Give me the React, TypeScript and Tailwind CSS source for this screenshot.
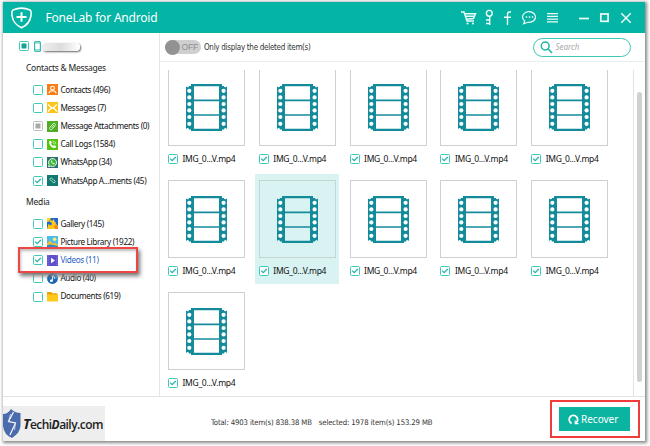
import type { ReactNode } from 'react';

type CheckState = 'on' | 'off' | 'partial' | 'disabled';

function Check({ state, size = 10 }: { state: CheckState; size?: number }) {
  const grey = state === 'disabled';
  const stroke = grey ? '#bcbcbc' : '#3fc9b7';
  return (
    <svg width={size} height={size} viewBox="0 0 10 10" className="shrink-0">
      <rect x="0.5" y="0.5" width="9" height="9" rx="1" fill="#fff" stroke={stroke} />
      {state === 'on' && <path d="M2.2 4.6 4.2 6.7 7.8 3" fill="none" stroke="#1fb5a3" strokeWidth="1.2" />}
      {(state === 'partial' || grey) && (
        <rect x="2.5" y="2.5" width="5" height="5" fill={grey ? '#a9a9a9' : '#12a594'} />
      )}
    </svg>
  );
}

const icons: Record<string, ReactNode> = {
  contacts: (
    <>
      <rect width="11" height="11" fill="#fb7d16" />
      <circle cx="5.5" cy="4.2" r="1.9" fill="none" stroke="#fff" strokeWidth="1.1" />
      <path d="M2 9.3C2.2 7.3 3.3 6.8 5.5 6.8S8.8 7.3 9 9.3" fill="none" stroke="#fff" strokeWidth="1.1" />
    </>
  ),
  messages: (
    <>
      <rect width="11" height="11" fill="#fbc418" />
      <path d="M1 2.5 5.5 6.5 10 2.5M1 9.5 4.2 6M10 9.5 6.8 6" fill="none" stroke="#fff" strokeWidth="1.2" />
    </>
  ),
  attach: (
    <>
      <rect width="11" height="11" fill="#4fae25" />
      <path d="M3 6.2 6 2.8C7.3 1.7 9.2 3.2 8.1 4.7L5 8.3C3.7 9.6 1.7 8 3 6.2ZM4.5 6.8 7 4" fill="none" stroke="#d6f3c5" strokeWidth="1" />
    </>
  ),
  calls: (
    <>
      <rect width="11" height="11" fill="#55c411" />
      <path d="M2.2 2.6 3.6 1.6 5 3.6 4.1 4.6C4.4 5.8 5.3 6.6 6.4 7L7.4 6.1 9.2 7.4 8.4 8.9C5.5 10 1.5 6 2.2 2.6Z" fill="#fff" />
      <path d="M5.7 2A3.4 3.4 0 0 1 9 5.3M5.7 3.7A1.8 1.8 0 0 1 7.3 5.3" fill="none" stroke="#e3ffd0" strokeWidth=".7" />
    </>
  ),
  whatsapp: (
    <>
      <rect width="11" height="11" fill="#2c6f70" />
      <path d="M1.5 9.7 2.1 7.6A4 4 0 1 1 3.7 9.1Z" fill="#39b637" stroke="#fff" strokeWidth=".9" />
      <path d="M4 3.6C3.6 5.5 5.5 7.6 7.4 7.2L7.6 6.3 6.6 5.7 6 6.2 4.9 5 5.3 4.4 4.8 3.4Z" fill="#fff" />
    </>
  ),
  waattach: (
    <>
      <rect width="11" height="11" fill="#137a70" />
      <path d="M3 4.4A1.2 1.2 0 0 1 4.8 3.2L6.6 5.1M4.4 5.5 6.2 7.6A1.2 1.2 0 0 0 8 6.2L7 5M3 4.4 4.2 5.8" fill="none" stroke="#b9ded9" strokeWidth="1" />
    </>
  ),
  gallery: (
    <>
      <rect width="11" height="11" fill="#2166d1" />
      <path d="M0 11 1.5 6 4 7.5 7 3.5 11 8V11Z" fill="#ffc615" />
      <path d="M0 0H4L2 3.5 0 4Z" fill="#ffd21c" />
      <path d="M3.5 1.5 5 3 7 1 7.4 3.6 9.5 4.5 6.4 5.2 5 7 4.6 4.4 2.5 4Z" fill="#ffcc17" />
      <path d="M7 8 9 6.2 11 8.4V11H8Z" fill="#f18a19" />
    </>
  ),
  pictures: (
    <>
      <rect width="11" height="11" fill="#4cbcec" />
      <circle cx="7.6" cy="3.2" r="1.7" fill="#fff06b" />
      <path d="M0 7.5 3 4.6 6 8 8 6.6 11 9V11H0Z" fill="#f8bd2b" />
      <path d="M0 9.2 3.5 8.5 11 10V11H0Z" fill="#258ed0" />
    </>
  ),
  videos: (
    <>
      <rect width="11" height="11" fill="#5c50cd" />
      <path d="M1.1 0V11M9.9 0V11" stroke="#8f86e6" strokeWidth="1" strokeDasharray="1.2 1" />
      <path d="M4 2.8 8 5.5 4 8.2Z" fill="#fff" />
    </>
  ),
  audio: (
    <>
      <circle cx="5.5" cy="5.5" r="5.4" fill="#1d66b4" />
      <path d="M5.5.1A5.4 5.4 0 0 1 10.9 5.5L5.5 5.5Z" fill="#4298df" />
      <path d="M5.4 7.7V2.2C6.2 3.5 8 3.6 7.5 5.7" fill="none" stroke="#fff" strokeWidth="1" />
      <ellipse cx="4.4" cy="7.8" rx="1.5" ry="1.2" fill="#fff" />
    </>
  ),
  documents: (
    <>
      <path d="M0 1H4.3L5.3 2.3H10.3V5H0Z" fill="#e9a300" />
      <rect y="3.5" width="11" height="7" rx=".5" fill="#ffc91b" />
    </>
  ),
};

function Row({ icon, label, state = 'off', active = false }: {
  icon: string; label: string; state?: CheckState; active?: boolean;
}) {
  return (
    <div className="flex h-[18.2px] items-center pl-[29.5px]">
      <Check state={state} />
      <svg width="11" height="11" viewBox="0 0 11 11" className="ml-1 shrink-0">{icons[icon]}</svg>
      <span className={`ml-[3px] text-[8.2px] leading-none tracking-[-0.36px] whitespace-nowrap ${active ? 'text-[#2b5fc4]' : 'text-[#111]'}`}>{label}</span>
    </div>
  );
}

function Film() {
  const holes = [6.8, 13.4, 20, 26.4, 33, 39.8];
  return (
    <svg width="41" height="47" viewBox="0 0 41 47">
      <path
        fill="#148b9b" fillRule="evenodd"
        d="M5 0H36V2H38Q38 3.2 39.3 3.2Q41 3.2 41 2V45.5Q41 44 39.3 44Q38 44 38 45.5H36V47H5V45.5H3Q3 44 1.7 44Q0 44 0 45.5V2Q0 3.2 1.7 3.2Q3 3.2 3 2H5ZM8 2.3V15.6H33V2.3ZM8 17.2V30.2H33V17.2ZM8 31.8V44.7H33V31.8Z"
      />
      {holes.map((y) => (
        <g key={y} className="fill-white">
          <circle cx="3.3" cy={y} r="2.1" />
          <circle cx="37.6" cy={y} r="2.1" />
        </g>
      ))}
    </svg>
  );
}

function Tile({ selected = false }: { selected?: boolean }) {
  return (
    <div className={`h-[110px] w-[84px] pt-[6px] pl-[3.5px] ${selected ? 'bg-[#d8f3f1]' : ''}`}>
      <div className={`flex h-[78px] w-[77px] items-center justify-center border ${selected ? 'border-[#c3d6d5]' : 'border-[#cfd1d1]'}`}><Film /></div>
      <div className="mt-[8px] flex items-center">
        <Check state="on" />
        <span className="ml-[4.5px] text-[8.5px] leading-[10px] tracking-[-0.3px] whitespace-nowrap text-[#111]">IMG_0...V.mp4</span>
      </div>
    </div>
  );
}

function TitleIcons() {
  return (
    <svg width="180" height="20" viewBox="458 8 180 20" fill="none" stroke="#eefcf9" strokeWidth="1.4">
      <path d="M461 12H464L467 21H474M464.5 13.8H475.5L473.5 18.5 466 19.2M465.3 16.2H474.5" />
      <circle cx="467.5" cy="23.5" r="1" fill="#fff" stroke="none" />
      <circle cx="473" cy="23.5" r="1" fill="#fff" stroke="none" />
      <circle cx="489.3" cy="13.3" r="2.9" />
      <path d="M489.7 16.3V25M489.5 20H486M489.5 23.5H486" />
      <path d="M511 12H509.5Q507.5 12 507.5 14.5V25M504 17.3H511" />
      <path d="M524.7 21A6.5 5.4 0 1 1 528 22.3L523.6 23.8Z" strokeWidth="1.2" />
      <path d="M525.8 17H527.2M528.8 17H530.2M531.8 17H533.2" />
      <path d="M547 13.7H558M547 16.4H558M547 19.1H558M547 21.8H558" strokeWidth="1.3" />
      <path d="M579 18.5H589" strokeWidth="1.7" />
      <rect x="600.8" y="14" width="7.3" height="7.3" strokeWidth="1.7" />
      <path d="M621.3 13.3 630.7 22.7M630.7 13.3 621.3 22.7" strokeWidth="1.5" />
    </svg>
  );
}

export default function App() {
  return (
    <div className="relative h-[446px] w-[650px] overflow-hidden bg-[#fdfdfd] pt-[2px] pl-[3px] font-['Noto_Sans','Open_Sans',sans-serif]">
      <div className="flex h-[439px] w-[642px] flex-col bg-white shadow-[1px_1px_3px_1px_#888]">
        <header className="flex h-[31px] shrink-0 items-center bg-[#04b4a4] pl-[8px]">
          <svg width="21" height="22" viewBox="0 0 21 22" fill="none" stroke="#fff" strokeWidth="1.6" className="shrink-0">
            <path d="M2 3Q10.5-.7 19 3Q20.7 4 19.9 9Q18.7 17 10.5 20.8Q2.3 17 1.1 9Q.3 4 2 3Z" />
            <path d="M10.5 5.2V14.8M5.5 10H15.5" strokeWidth="2" />
          </svg>
          <h1 className="ml-[13.5px] w-[404px] shrink-0 text-[12px] leading-none tracking-[-0.19px] text-white">FoneLab for Android</h1>
          <div className="ml-[8.5px] shrink-0"><TitleIcons /></div>
        </header>

        <div className="flex min-h-0 flex-1">
          <aside className="w-[157px] shrink-0 border-r border-[#e5e5e5]">
            <div className="flex h-[26px] items-center pl-[16px]">
              <Check state="partial" />
              <svg width="7" height="11" viewBox="0 0 7 11" className="ml-[5px]">
                <rect x=".6" y=".6" width="5.8" height="9.8" rx="1" fill="none" stroke="#35bcae" strokeWidth="1.2" />
                <path d="M1 2H6M1 8.8H6" stroke="#35bcae" strokeWidth=".8" />
              </svg>
              <div className="mt-[2px] ml-[1px] h-[8px] w-[38px] rounded-[4px] bg-gradient-to-r from-[#eee] via-[#ddd] via-50% to-white shadow-[1px_1px_2px_#666]" />
            </div>
            <h2 className="mt-[3px] flex h-[12px] items-center pl-[23px] text-[8.5px] leading-none tracking-[-0.27px] whitespace-nowrap text-[#222]">Contacts &amp; Messages</h2>
            <div className="mt-[6.6px]">
              <Row icon="contacts" label="Contacts (496)" />
              <Row icon="messages" label="Messages (7)" />
              <Row icon="attach" label="Message Attachments (0)" state="disabled" />
              <Row icon="calls" label="Call Logs (1584)" />
              <Row icon="whatsapp" label="WhatsApp (34)" />
              <Row icon="waattach" label="WhatsApp A...ments (45)" state="on" />
            </div>
            <h2 className="mt-[6.8px] flex h-[12px] items-center pl-[23px] text-[8.5px] leading-none tracking-[-0.2px] text-[#222]">Media</h2>
            <div className="mt-[6.2px]">
              <Row icon="gallery" label="Gallery (145)" />
              <Row icon="pictures" label="Picture Library (1922)" state="on" />
              <Row icon="videos" label="Videos (11)" state="on" active />
              <Row icon="audio" label="Audio (40)" />
              <Row icon="documents" label="Documents (619)" />
            </div>
          </aside>

          <main className="flex min-w-0 flex-1 flex-col">
            <div className="flex h-[29px] shrink-0 items-center border-b border-[#e6eeee] pl-[4.5px]">
              <div className="flex h-[14px] w-[36px] shrink-0 items-center rounded-full bg-[#cfcfcf]">
                <div className="h-[15px] w-[15px] shrink-0 rounded-full bg-[#929292]" />
                <span className="ml-[2px] font-['Liberation_Sans',sans-serif] text-[8.5px] leading-none tracking-[-0.2px] text-[#8d8d8d]">OFF</span>
              </div>
              <span className="mt-[2px] ml-[3.5px] w-[328.5px] shrink-0 font-['DejaVu_Sans_Condensed','DejaVu_Sans',sans-serif] text-[8px] leading-none tracking-[-0.29px] whitespace-nowrap text-[#333]">Only display the deleted item(s)</span>
              <div className="flex h-[19px] w-[98px] shrink-0 items-center rounded-full border border-[#3bc8b5] pl-[6px]">
                <svg width="13" height="13" viewBox="0 0 13 13" fill="none" stroke="#17b5a3" strokeWidth="1.5">
                  <circle cx="5.2" cy="5" r="3.9" /><path d="M8 7.8 12 12" />
                </svg>
                <span className="ml-[3px] text-[8px] leading-none text-[#aaa] italic">Search</span>
              </div>
            </div>
            <div className="mt-[8px] flex min-h-0 flex-1">
              <div className="min-w-0 flex-1 overflow-hidden pl-[4.5px]">
                <div className="-mt-[8px] grid w-[454px] grid-cols-5 gap-y-[2px]">
                  {Array.from({ length: 11 }, (_, i) => <Tile key={i} selected={i === 6} />)}
                </div>
              </div>
              <div className="flex w-[12px] shrink-0 justify-center border-l border-[#e2e2e2]">
                <div className="mt-[22px] h-[290px] w-[5px] rounded-full bg-[#d0d0d0]" />
              </div>
            </div>
          </main>
        </div>

        <footer className="flex h-[45px] shrink-0 border-t border-[#e3e3e3]">
          <div className="mt-[9px] flex h-[35px] w-[102px] shrink-0 items-center bg-[#eee]">
            <svg width="18" height="29" viewBox="0 0 18 29" className="shrink-0">
              <path d="M0 5Q5 5 8 0Q12 4 17.5 4V17Q17 24 9 29Q1 26 0 17Z" fill="#4a6cae" />
              <path d="M10.5 3 5.5 12.5 12.5 14 7 26" fill="none" stroke="#fff" strokeWidth="1.2" />
              <path d="M7.5 5 5.5 12.5M12.5 14 11.5 21" stroke="#dce4f3" strokeWidth=".8" />
            </svg>
            <span className="ml-[2px] font-['Open_Sans',sans-serif] text-[12px] leading-none font-semibold tracking-[-0.55px] whitespace-nowrap text-[#222]">
              <i className="text-[14px] font-bold">T</i>echi<i className="font-bold">D</i>aily.com
            </span>
          </div>
          <p className="mt-[20px] ml-[106px] w-[348px] shrink-0 font-['DejaVu_Sans_Condensed','DejaVu_Sans',sans-serif] text-[7.7px] leading-[12px] tracking-[-0.12px] whitespace-nowrap text-[#333]">
            <span>Total: 4903 item(s) 838.38 MB</span><span className="ml-[7px]">selected: 1978 item(s) 153.29 MB</span>
          </p>
          <button className="mt-[10px] flex h-[24px] w-[71px] shrink-0 items-center bg-[#0bb3a1] pl-[9px] text-white">
            <svg width="11" height="11" viewBox="0 0 11 11" fill="none" stroke="#fff" strokeWidth="1.8" className="shrink-0">
              <path d="M3.6 9.4A4.2 4.2 0 1 1 7.6 9.2" /><path d="M10.4 9.6H7.2V6.6" strokeWidth="1.1" />
            </svg>
            <span className="ml-[2px] text-[10px] leading-none">Recover</span>
          </button>
        </footer>
      </div>
      <div className="absolute top-[247px] left-[18px] h-[26px] w-[120px] border-2 border-[#ef4643] shadow-[2px_3px_4px_#777,inset_1px_2px_3px_#bbb]" />
      <div className="absolute top-[400px] left-[550px] h-[38px] w-[90px] border-2 border-[#f13b3b]" />
    </div>
  );
}
